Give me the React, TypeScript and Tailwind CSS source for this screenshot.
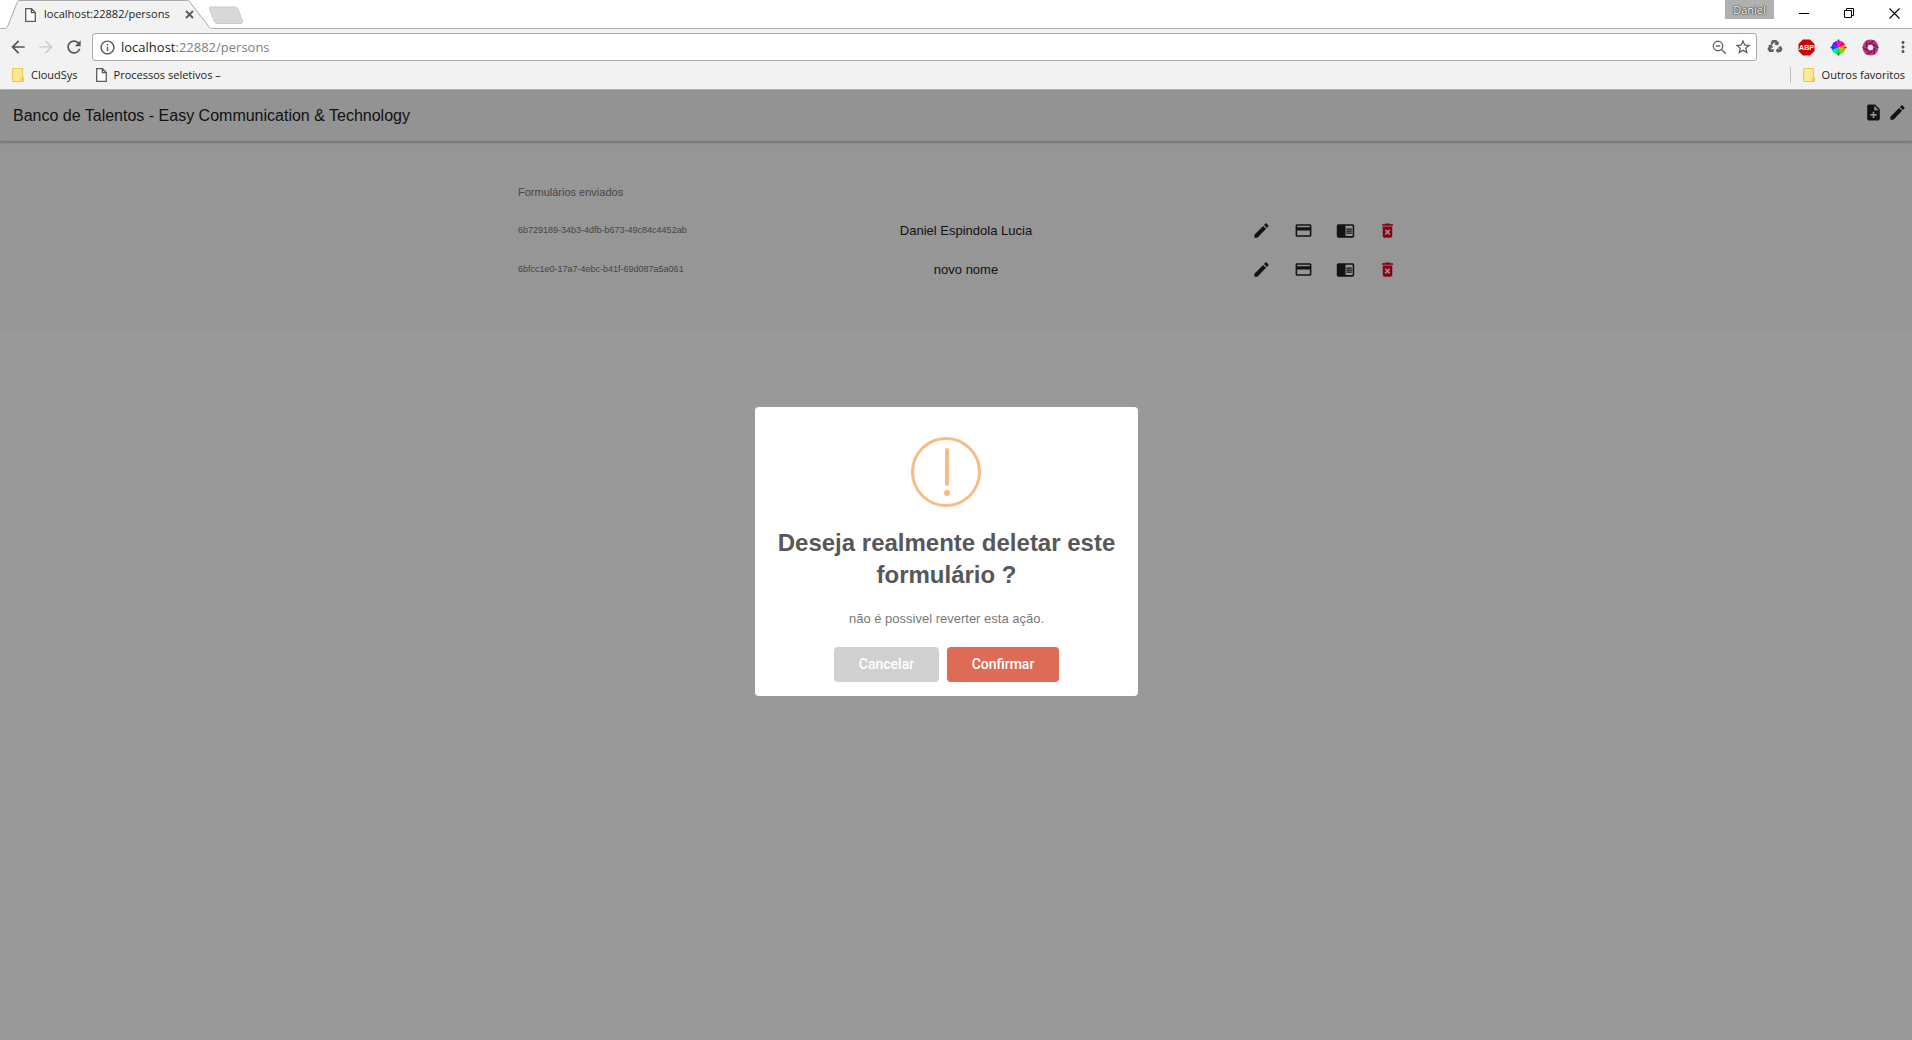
import type { ReactNode } from 'react';
import {
  MdArrowBack,
  MdArrowForward,
  MdRefresh,
  MdInfoOutline,
  MdStarBorder,
  MdMoreVert,
  MdNoteAdd,
  MdEdit,
  MdCreditCard,
  MdChromeReaderMode,
  MdDeleteForever,
} from 'react-icons/md';

const FONT_CHROME = "font-['Open_Sans','Noto_Sans',sans-serif]";
const FONT_PAGE = "font-['Liberation_Sans',Arial,sans-serif]";

type Person = { id: string; name: string };

const people: Person[] = [
  { id: '6b729189-34b3-4dfb-b673-49c84c4452ab', name: 'Daniel Espindola Lucia' },
  { id: '6bfcc1e0-17a7-4ebc-b41f-69d087a5a061', name: 'novo nome' },
];

function PageIcon() {
  return (
    <svg width="11" height="14" viewBox="0 0 11 14" fill="#fff" stroke="#5a5a5a" strokeWidth="1.3" aria-hidden="true">
      <path d="M.7 .7h5.800l3.800 3.800v8.800H.7zM6.300 .7v4h4" />
    </svg>
  );
}

function FolderIcon() {
  return (
    <svg width="12" height="14" viewBox="0 0 12 14" fill="#ffe795" stroke="#ebc94f" aria-hidden="true">
      <path d="M.5 .5h10v13H.5zM11.5 9.5v4h-2.500v-3z" />
    </svg>
  );
}

function TabStrip() {
  return (
    <div className="flex h-[29px] items-end bg-white">
      <div className="h-px w-[5px] bg-[#b0b0b0]" />
      <div className="relative h-[29px] w-[207px]">
        <svg className="absolute inset-0" width="207" height="29" viewBox="0 0 207 29" aria-hidden="true">
          <path
            d="M0 28.500C1.500 28.200 2 27.500 3 25.500L11.500 4C12.500 1.500 13 .5 15 .5H182.500C184.500 .5 185 1.500 186 3.500L203 25.500C204 27.500 204.500 28.200 206.500 28.500"
            fill="#f2f2f2"
            stroke="#a9a9a9"
          />
          <path d="M2 28.500H205" stroke="#f2f2f2" />
        </svg>
        <div className="relative flex h-full items-center pl-5">
          <PageIcon />
          <span className="w-[144px] pl-2 text-[11px] whitespace-nowrap text-[#1c1c1c]">localhost:22882/persons</span>
          <button type="button" aria-label="Fechar guia" className="pl-[5px]">
            <svg width="9" height="9" viewBox="0 0 9 9" stroke="#5a5a5a" strokeWidth="1.8" aria-hidden="true">
              <path d="M1 1l7 7M8 1L1 8" />
            </svg>
          </button>
        </div>
      </div>
      <div className="flex h-[29px] flex-1 border-b border-[#b0b0b0]">
        <button type="button" aria-label="Nova guia" className="-ml-[3px] mt-1.5 h-[19px]">
          <svg width="36" height="19" viewBox="0 0 36 19" aria-hidden="true">
            <path d="M.5 3Q-.5 1 1.500 1H26Q28 1 29 3L33.500 15Q34 17.500 32 17.500H8Q6.500 17.500 5.500 15.500z" fill="#d8d8d8" stroke="#cacaca" />
          </svg>
        </button>
        <div className="flex-1" />
        <button
          type="button"
          className="h-[19px] w-[49px] bg-[#b0b0b0] text-[11px] leading-[17px] text-white [text-shadow:0_0_2px_#333,0_0_1px_#333,0_0_1px_#333]"
        >
          Daniel
        </button>
        <div className="ml-[25px] flex items-start gap-[35px] pt-2 pr-3">
          <button type="button" aria-label="Minimizar" className="h-[10px]">
            <svg width="10" height="10" viewBox="0 0 10 10" stroke="#000" aria-hidden="true">
              <path d="M0 5.500h10" />
            </svg>
          </button>
          <button type="button" aria-label="Restaurar" className="h-[10px]">
            <svg width="10" height="10" viewBox="0 0 10 10" fill="none" stroke="#000" aria-hidden="true">
              <path d="M.5 2.500h7v7h-7zM2.500 2.500v-2h7v7h-2" />
            </svg>
          </button>
          <button type="button" aria-label="Fechar" className="h-[10px]">
            <svg width="11" height="11" viewBox="0 0 11 11" stroke="#000" strokeWidth="1.100" aria-hidden="true">
              <path d="M.5 .5l10 10M10.500 .5l-10 10" />
            </svg>
          </button>
        </div>
      </div>
    </div>
  );
}

function RecycleIcon() {
  return (
    <svg width="16" height="16" viewBox="0 0 16 16" fill="#56626e" aria-hidden="true">
      <path d="M5.200 1h4.300l1.500 2.300 1.200-.7-1.100 3.900-3.900-.9 1.200-.8-1-1.700-1.600 2.500-2.300-1.400z" />
      <path d="M1 6.300l3.900-1 1 3.800-1.200-.6-1 1.700h3v2.800H2.300L.4 9.900l1.700-3z" />
      <path d="M11.300 8.200l2.400-1.400 1.900 3.200-1.600 3h-2.600v1.500L8.600 11.600l2.800-2.900v1.500h1z" />
    </svg>
  );
}

function AdblockIcon() {
  return (
    <svg width="17" height="17" viewBox="0 0 17 17" aria-hidden="true">
      <path d="M5 .5h7L16.500 5v7L12 16.500H5L.5 12V5z" fill="#cf0000" />
      <text x="8.500" y="11.300" textAnchor="middle" fontSize="7" fontWeight="700" fill="#fff" fontFamily="Liberation Sans, sans-serif">
        ABP
      </text>
    </svg>
  );
}

function ColorWheelIcon() {
  const wedges = ['#f0f', '#f04', '#f80', '#7d0', '#0d2', '#0e8', '#05f', '#80f'];
  const starts = [0, 45, 90, 135, 180, 225, 270, 315];
  return (
    <svg width="17" height="17" viewBox="-8.5 -8.5 17 17" aria-hidden="true">
      {starts.map((a, i) => (
        <path key={a} d="M0 0V-7A7 7 0 0 1 4.950 -4.950z" fill={wedges[i]} transform={`rotate(${a - 20})`} />
      ))}
      <path d="M0-8v2M0 6v2M-8 0h2M6 0h2" stroke="#444" strokeWidth="1.500" />
    </svg>
  );
}

function ShutterIcon() {
  return (
    <svg width="17" height="17" viewBox="-8.5 -8.5 17 17" aria-hidden="true">
      <circle r="8" fill="#c8347a" />
      {[0, 60, 120, 180, 240, 300].map((a) => (
        <path key={a} d="M-1.500-2.500L4.600-6.500L3.600-7L-2-4.500z" fill="#6b1c45" transform={`rotate(${a})`} />
      ))}
      <circle r="2.800" fill="#f2e6ec" />
    </svg>
  );
}

function Toolbar() {
  return (
    <div className="flex h-9 items-center bg-[#f2f2f2] pl-2 text-[#555]">
      <div className="flex items-center gap-2">
        <button type="button" aria-label="Voltar">
          <MdArrowBack size={20} />
        </button>
        <button type="button" aria-label="Avançar" className="text-[#cfcfcf]">
          <MdArrowForward size={20} />
        </button>
        <button type="button" aria-label="Recarregar">
          <MdRefresh size={20} />
        </button>
      </div>
      <div className="ml-2 flex h-7 flex-1 items-center rounded-[3px] border border-[#a9a9a9] bg-white pr-1 pl-1.5">
        <MdInfoOutline size={17} />
        <label className="relative ml-[5px] flex h-full flex-1 items-center text-[13px] leading-5">
          <span aria-hidden="true" className="whitespace-nowrap text-[#808080]">
            <span className="text-[#1c1c1c]">localhost</span>:22882/persons
          </span>
          <input
            type="text"
            aria-label="Endereço"
            defaultValue="localhost:22882/persons"
            className="absolute inset-0 w-full bg-transparent text-transparent outline-none"
          />
        </label>
        <button type="button" aria-label="Zoom" className="mr-[7px]">
          <svg width="15" height="15" viewBox="0 0 15 15" fill="none" stroke="#666" strokeWidth="1.400" aria-hidden="true">
            <circle cx="6" cy="6" r="4.700" />
            <path d="M3.800 6h4.400M9.500 9.500l4.300 4.300" />
          </svg>
        </button>
        <button type="button" aria-label="Adicionar aos favoritos">
          <MdStarBorder size={18} />
        </button>
      </div>
      <div className="ml-[10px] flex items-center gap-[15px]">
        <button type="button" aria-label="Reciclar">
          <RecycleIcon />
        </button>
        <button type="button" aria-label="Bloqueador de anúncios">
          <AdblockIcon />
        </button>
        <button type="button" aria-label="Seletor de cores">
          <ColorWheelIcon />
        </button>
        <button type="button" aria-label="Captura">
          <ShutterIcon />
        </button>
        <button type="button" aria-label="Menu">
          <MdMoreVert size={18} />
        </button>
      </div>
    </div>
  );
}

function BookmarksBar() {
  return (
    <nav className="flex h-[25px] items-center border-b border-[#b4b4b4] bg-[#f2f2f2] pr-[7px] pb-1 pl-3 text-[11px] text-[#1c1c1c]">
      <a href="#cloudsys" className="flex items-center gap-[7px]">
        <FolderIcon />
        CloudSys
      </a>
      <a href="#processos" className="ml-[18px] flex items-center gap-[7px]">
        <PageIcon />
        Processos seletivos –
      </a>
      <div className="ml-auto h-4 w-px bg-[#bdbdbd]" />
      <a href="#outros" className="ml-3 flex items-center gap-[7px]">
        <FolderIcon />
        Outros favoritos
      </a>
    </nav>
  );
}

function IconCell({ label, className, children }: { label: string; className?: string; children: ReactNode }) {
  return (
    <td className="w-[42px] p-0">
      <button type="button" aria-label={label} className={className ?? 'flex w-full justify-center text-[#212121]'}>
        {children}
      </button>
    </td>
  );
}

function PersonRow({ person }: { person: Person }) {
  return (
    <tr className="h-[39px]">
      <td className="w-[188px] p-0 pl-3.5 text-[9px] whitespace-nowrap text-[#757575]">{person.id}</td>
      <td className="p-0 text-center text-[13px] text-[#212121]">{person.name}</td>
      <IconCell label="Editar">
        <MdEdit size={19} />
      </IconCell>
      <IconCell label="Cartão">
        <MdCreditCard size={19} />
      </IconCell>
      <IconCell label="Visualizar">
        <MdChromeReaderMode size={19} />
      </IconCell>
      <IconCell label="Deletar" className="flex w-full justify-center text-[#e5001c]">
        <MdDeleteForever size={19} />
      </IconCell>
    </tr>
  );
}

function ConfirmDialog() {
  return (
    <div className="absolute inset-0 flex items-start justify-center bg-black/40 pt-[317px] pr-[19px]">
      <div
        role="alertdialog"
        aria-labelledby="dialog-title"
        className="flex w-[383px] flex-col items-center rounded-[4px] bg-white px-4 pt-[30px] pb-3.5"
      >
        <svg width="71" height="70" viewBox="0 0 71 70" fill="#f8bb86" aria-hidden="true">
          <circle cx="35" cy="35" r="33.500" fill="none" stroke="#f8bb86" strokeWidth="3" />
          <rect x="34" y="11" width="4" height="38" rx="2" />
          <circle cx="36" cy="56" r="3" />
        </svg>
        <h2 id="dialog-title" className="mt-5 text-center text-[24px] leading-8 font-bold text-[#575757]">
          Deseja realmente deletar este formulário ?
        </h2>
        <p className="mt-[18px] text-[13px] leading-5 text-[#797979]">não é possivel reverter esta ação.</p>
        <div className="mt-[18px] flex gap-2 font-['Roboto',sans-serif] text-[14px] font-medium text-white">
          <button type="button" className="h-[35px] w-[105px] rounded-[4px] bg-[#d0d0d0]">
            Cancelar
          </button>
          <button type="button" className="h-[35px] w-[112px] rounded-[4px] bg-[#dd6b55]">
            Confirmar
          </button>
        </div>
      </div>
    </div>
  );
}

export default function App() {
  return (
    <div className="flex min-h-screen flex-col bg-white">
      <div className={FONT_CHROME}>
        <TabStrip />
        <Toolbar />
        <BookmarksBar />
      </div>
      <div className={`relative flex-1 ${FONT_PAGE}`}>
        <header className="relative flex h-[52px] items-center justify-between border-b border-[#c8c8c8] bg-[#f5f5f5] pr-[5px] pl-[13px] shadow-[0_1px_2px_rgba(0,0,0,0.2)]">
          <h1 className="text-[16px] text-[#212121]">Banco de Talentos - Easy Communication &amp; Technology</h1>
          <div className="mb-1.5 flex gap-[5px] text-[#212121]">
            <button type="button" aria-label="Novo formulário">
              <MdNoteAdd size={19} />
            </button>
            <button type="button" aria-label="Editar formulário">
              <MdEdit size={19} />
            </button>
          </div>
        </header>
        <main className="bg-[#fafafa] pt-10 pb-[42px]">
          <table className="mx-auto w-[904px] table-fixed border-collapse">
            <caption className="pb-[9px] pl-3.5 text-left text-[11px] leading-5 text-[#757575]">Formulários enviados</caption>
            <tbody>
              {people.map((person) => (
                <PersonRow key={person.id} person={person} />
              ))}
            </tbody>
          </table>
        </main>
        <ConfirmDialog />
      </div>
    </div>
  );
}
